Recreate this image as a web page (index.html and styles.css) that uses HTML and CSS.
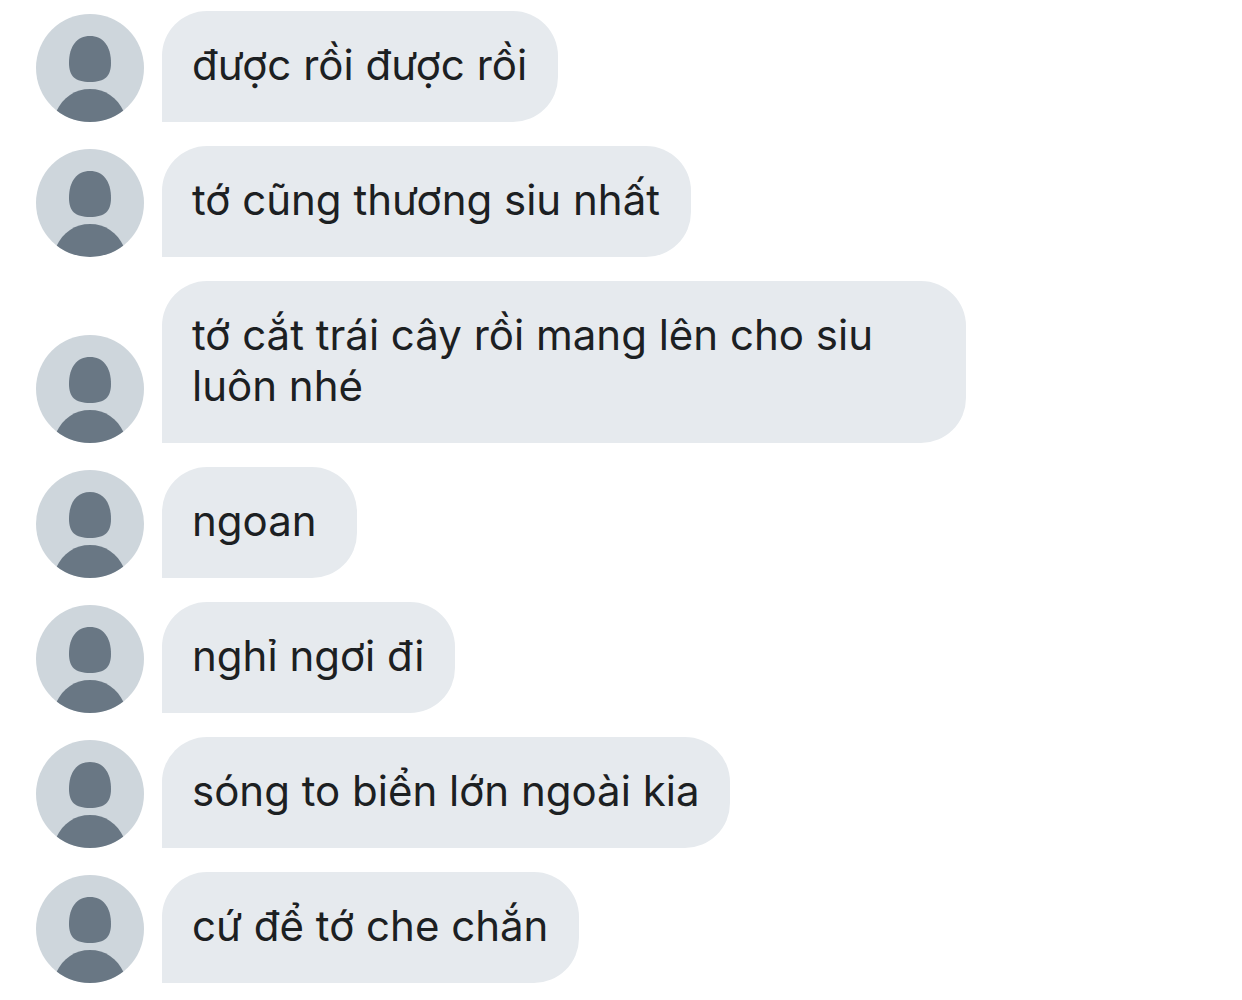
FILE: index.html
```html
<!DOCTYPE html>
<html lang="vi">
<head>
<meta charset="utf-8">
<meta name="viewport" content="width=device-width, initial-scale=1">
<title>Tin nhắn</title>
<link rel="stylesheet" href="styles.css">
</head>
<body>
<svg class="defs" aria-hidden="true">
  <symbol id="person" viewBox="0 0 108 108">
    <path d="M54 22C67 22 75 32 75 49C75 62 69 68 54 68C39 68 33 62 33 49C33 32 41 22 54 22Z"/>
    <path d="M20 98C27 83 39 75 54 75C69 75 81 83 88 98L88 108H20Z"/>
  </symbol>
</svg>
<main>
  <ul class="messages">
    <li class="message"><svg class="avatar" aria-hidden="true"><use href="#person"/></svg><p class="bubble">được rồi được rồi</p></li>
    <li class="message"><svg class="avatar" aria-hidden="true"><use href="#person"/></svg><p class="bubble">tớ cũng thương siu nhất</p></li>
    <li class="message"><svg class="avatar" aria-hidden="true"><use href="#person"/></svg><p class="bubble">tớ cắt trái cây rồi mang lên cho siu luôn nhé</p></li>
    <li class="message"><svg class="avatar" aria-hidden="true"><use href="#person"/></svg><p class="bubble">ngoan</p></li>
    <li class="message"><svg class="avatar" aria-hidden="true"><use href="#person"/></svg><p class="bubble">nghỉ ngơi đi</p></li>
    <li class="message"><svg class="avatar" aria-hidden="true"><use href="#person"/></svg><p class="bubble">sóng to biển lớn ngoài kia</p></li>
    <li class="message"><svg class="avatar" aria-hidden="true"><use href="#person"/></svg><p class="bubble">cứ để tớ che chắn</p></li>
  </ul>
</main>
</body>
</html>
```
FILE: styles.css
```css
* {
  box-sizing: border-box;
}

body {
  margin: 0;
  background: #fff;
  color: #1c2022;
  font-family: Inter, "Noto Sans", sans-serif;
  font-size: 42px;
  line-height: 51px;
}

.defs {
  display: none;
}

.messages {
  display: flex;
  flex-direction: column;
  gap: 24px;
  margin: 0;
  padding: 11px 36px 17px;
  list-style: none;
}

.message {
  display: flex;
  align-items: flex-end;
  gap: 18px;
}

.avatar {
  flex: none;
  width: 108px;
  height: 108px;
  border-radius: 50%;
  background: #ced6dc;
  fill: #697784;
}

.bubble {
  min-width: 195px;
  max-width: 804px;
  margin: 0;
  padding: 28px 31px 32px 30px;
  border-radius: 45px 45px 45px 0;
  background: #e6eaee;
}
```
